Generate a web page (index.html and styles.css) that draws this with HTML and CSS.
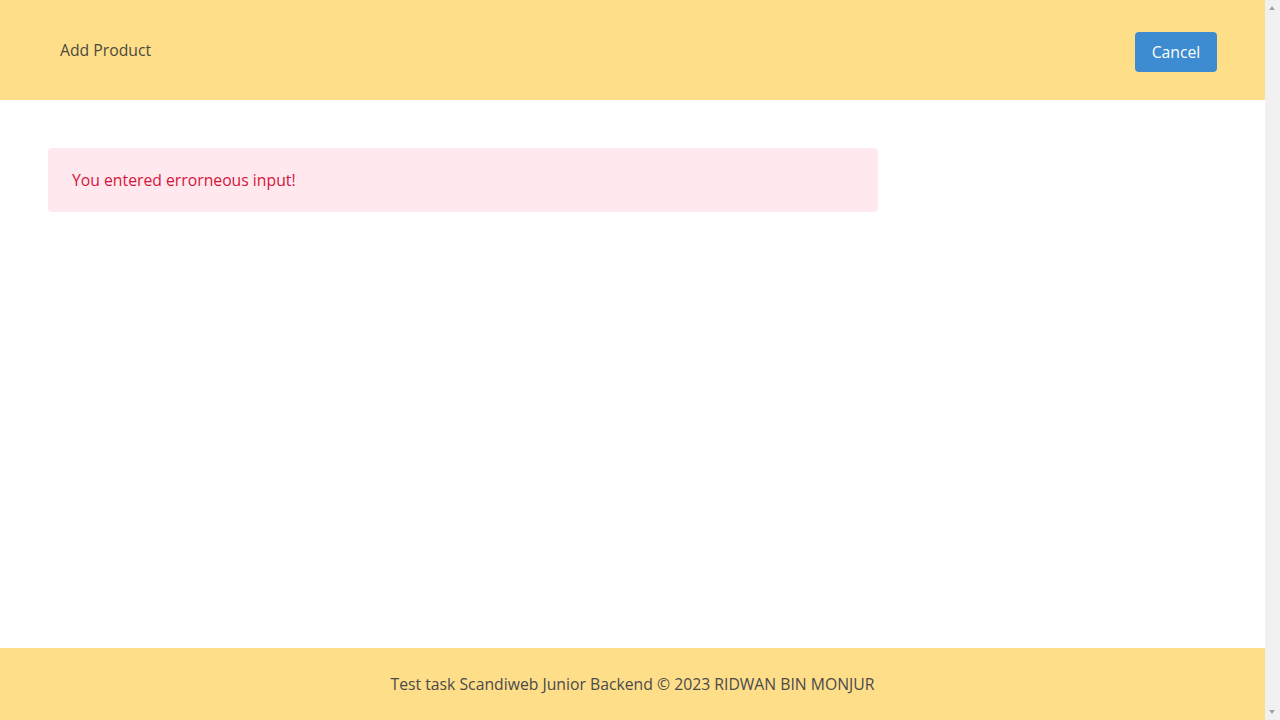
FILE: index.html
```html
<!DOCTYPE html>
<html lang="en">
<head>
<meta charset="utf-8">
<title>Add Product</title>
<link rel="stylesheet" href="styles.css">
</head>
<body>
<div class="page">
  <header class="topbar">
    <h1 class="title">Add Product</h1>
    <button class="btn-cancel" type="button">Cancel</button>
  </header>
  <main class="content">
    <div class="alert">You entered errorneous input!</div>
  </main>
  <footer class="footer">Test task Scandiweb Junior Backend © 2023 RIDWAN BIN MONJUR</footer>
</div>
<div class="scrollbar" aria-hidden="true">
  <span class="arrow-up"></span>
  <span class="arrow-down"></span>
</div>
</body>
</html>
```
FILE: styles.css
```css
html, body {
  margin: 0;
  padding: 0;
}
html {
  overflow: hidden;
}
body {
  font-family: "Open Sans", "Noto Sans", sans-serif;
  color: #4a4a4a;
  background: #ffffff;
}
.page {
  margin-right: 15px;
}
.topbar {
  height: 100px;
  box-sizing: border-box;
  background: #ffde8a;
  display: flex;
  align-items: flex-start;
  justify-content: space-between;
  padding: 32px 48px 0 60px;
}
.title {
  margin: 0;
  font-size: 15.75px;
  font-weight: 400;
  line-height: 36px;
  color: #4b4a3c;
}
.btn-cancel {
  height: 40px;
  width: 82px;
  border: none;
  border-radius: 4px;
  background: #3d8bd0;
  color: #ffffff;
  font-family: inherit;
  font-size: 15.75px;
  padding: 0;
}
.content {
  height: 548px;
  box-sizing: border-box;
  padding: 48px;
}
.alert {
  width: 830px;
  height: 64px;
  box-sizing: border-box;
  padding: 0 24px;
  display: flex;
  align-items: center;
  background: #ffe9ee;
  color: #d6143c;
  border-radius: 4px;
  font-size: 15.75px;
}
.footer {
  height: 80px;
  box-sizing: border-box;
  padding-top: 24px;
  background: #ffde8a;
  text-align: center;
  font-size: 15.75px;
  line-height: 24px;
  color: #4a4a4a;
}
.scrollbar {
  position: fixed;
  top: 0;
  right: 0;
  width: 15px;
  height: 100%;
  background: #f1f1f1;
}
.arrow-up,
.arrow-down {
  position: absolute;
  left: 4px;
  width: 0;
  height: 0;
  border-left: 3.5px solid transparent;
  border-right: 3.5px solid transparent;
}
.arrow-up {
  top: 6px;
  border-bottom: 4px solid #a3a3a3;
}
.arrow-down {
  bottom: 6px;
  border-top: 4px solid #a3a3a3;
}
```
